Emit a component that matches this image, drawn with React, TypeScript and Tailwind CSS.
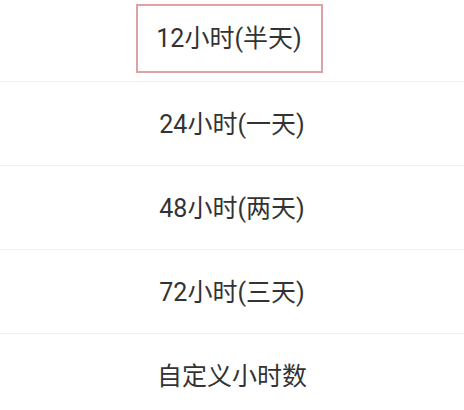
const options = ["12小时(半天)", "24小时(一天)", "48小时(两天)", "72小时(三天)", "自定义小时数"];

export default function App() {
  return (
    <div
      className="w-[464px] h-[410px] overflow-hidden bg-white text-[#333333]"
      style={{ fontFamily: "Roboto, 'Noto Sans CJK SC', sans-serif" }}
    >
      {options.map((label, i) => (
        <div
          key={label}
          className={
            i === 0
              ? "h-[81px] flex items-center justify-center"
              : "h-[84px] flex items-center justify-center border-t border-[#f0f0f0]"
          }
        >
          {i === 0 ? (
            <span className="relative -left-[3px] -top-[2px] flex items-center justify-center w-[187px] h-[69px] border-2 border-[#dca3a3] text-[25px] leading-none">
              {label}
            </span>
          ) : (
            <span className="relative top-[1px] text-[25px] leading-none">{label}</span>
          )}
        </div>
      ))}
    </div>
  );
}
